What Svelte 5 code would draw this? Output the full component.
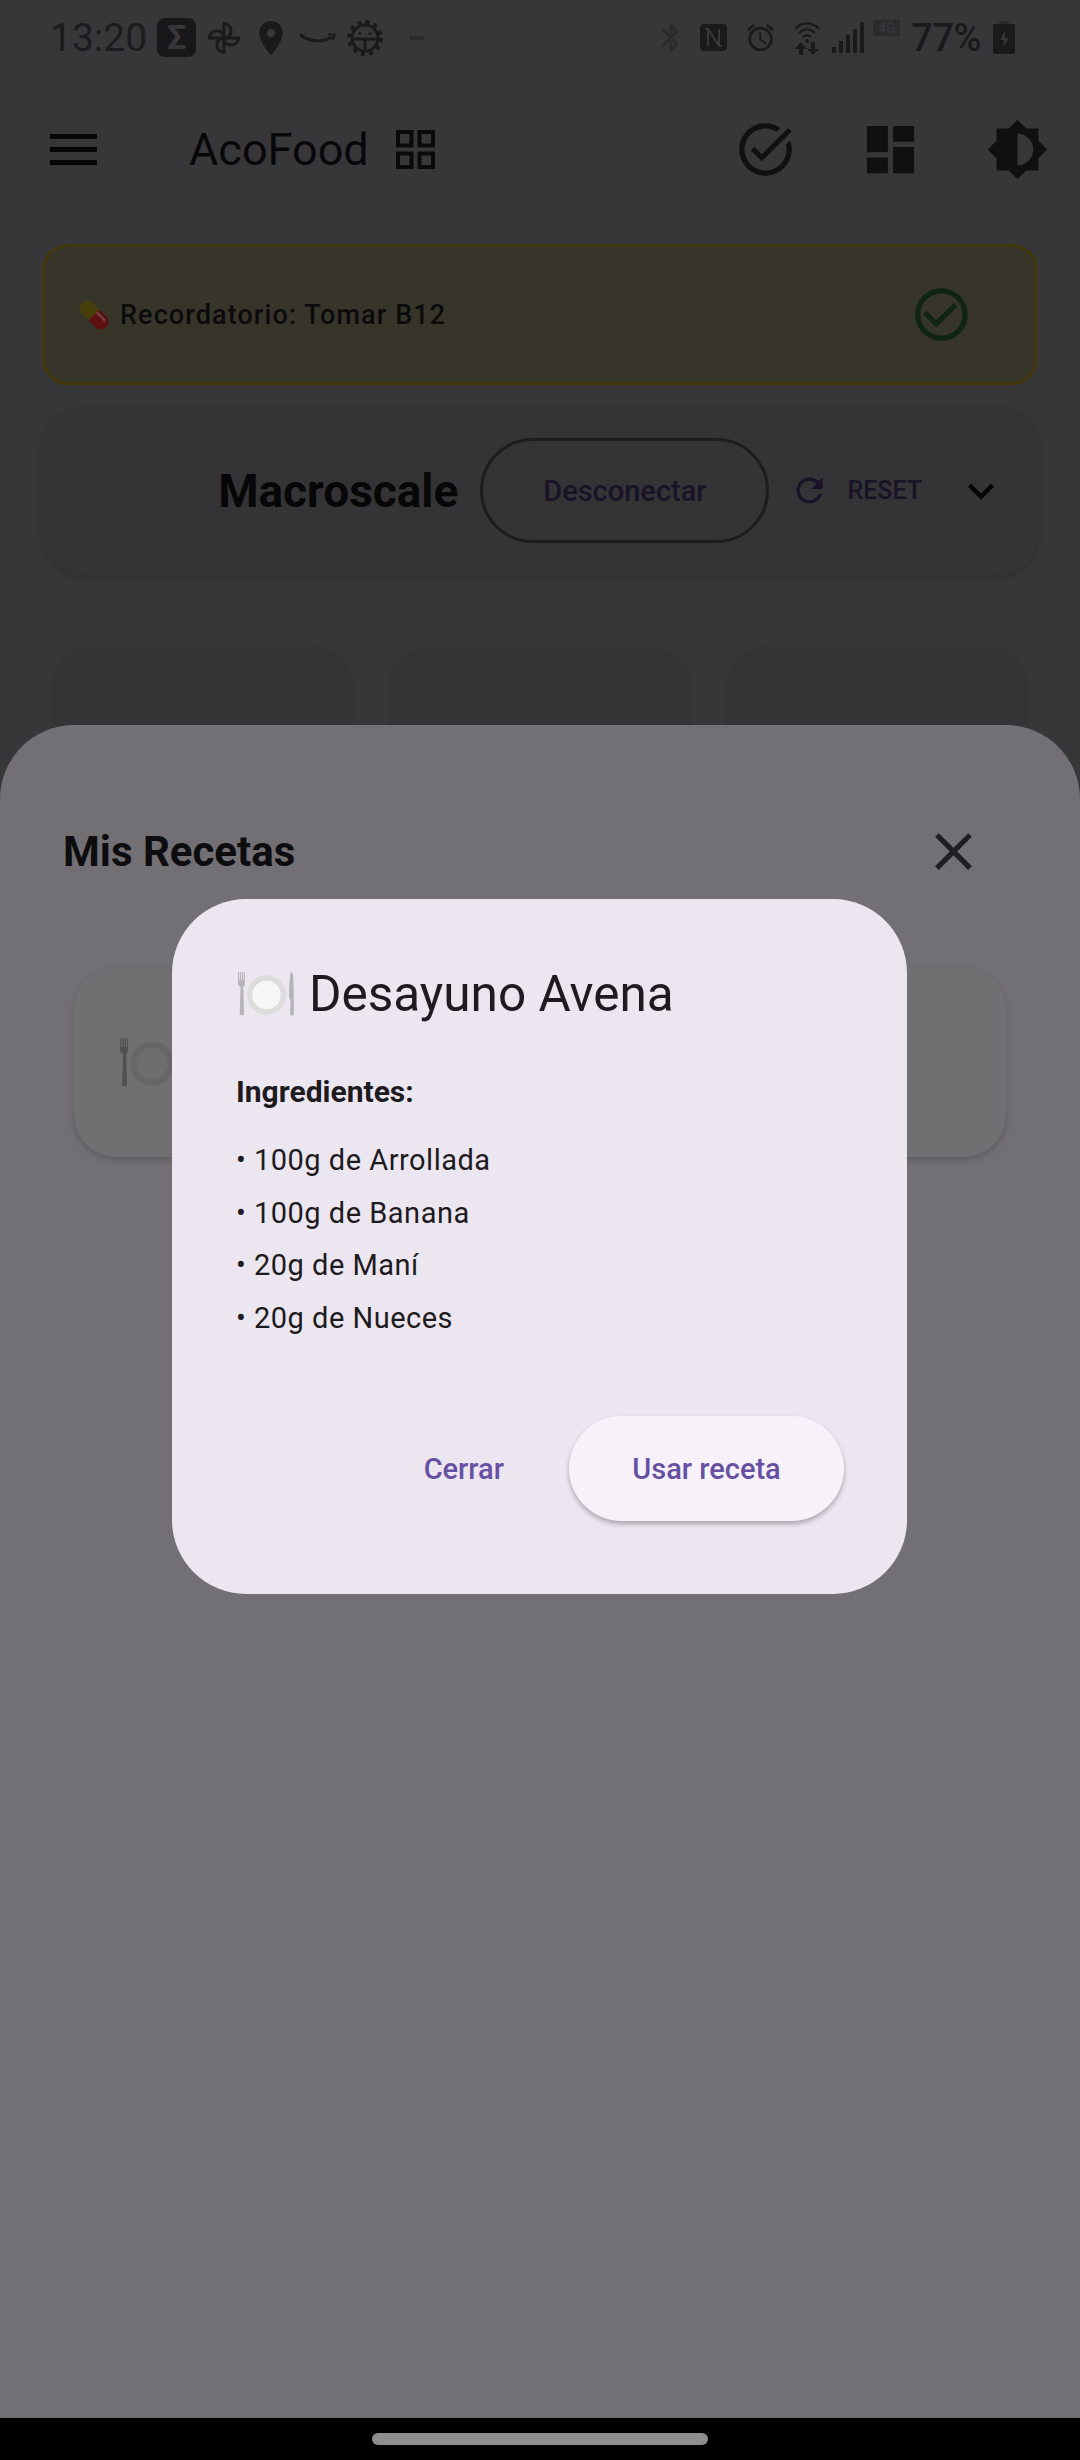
<script>
  const ingredients = ["100g de Arrollada", "100g de Banana", "20g de Maní", "20g de Nueces"];
  const petals = [0, 90, 180, 270];
  const bars = [
    { x: 0, h: 6 },
    { x: 7, h: 12 },
    { x: 14, h: 18 },
    { x: 21, h: 24 },
    { x: 28, h: 31 },
  ];
</script>

{#snippet plateEmoji()}
  <svg class="plate-emoji" viewBox="0 0 60 46">
    <path class="fork" d="M2 1h1.200v8h.8V1h1.200v8h.8V1h1.200v8h.8V1H9v11c0 2-1 3-1.600 3.500L8.200 43c0 2-4.400 2-4.400 0L4.600 15.500C3 15 2 14 2 12z" />
    <circle class="plate-rim" cx="31" cy="24" r="20" />
    <circle class="plate-in" cx="31" cy="24" r="14.500" />
    <path class="fork" d="M56 0c2 1 2.500 6 2.500 12l.5 31c0 2.500-4 2.500-4 0l.4-14-1.400-2C54 16 54.500 5 56 0z" />
  </svg>
{/snippet}

<div class="screen">
  <div class="page">
    <div class="status">
      <span class="time">13:20</span>
      <span class="sigma">Σ</span>
      <svg class="s-pinwheel" viewBox="0 0 36 36">
        {#each petals as r}
          <path d="M18 18V3.500A7 7 0 0 1 25 10.500Q25 18 18 18z" transform="rotate({r} 18 18)" />
        {/each}
      </svg>
      <svg class="s-pin" viewBox="5 2 14 20"><path d="M12 2C8.130 2 5 5.130 5 9c0 5.250 7 13 7 13s7-7.750 7-13c0-3.870-3.130-7-7-7zm0 9.500c-1.380 0-2.500-1.120-2.500-2.500s1.120-2.500 2.500-2.500 2.500 1.120 2.500 2.500-1.120 2.500-2.500 2.500z" /></svg>
      <svg class="s-smile" viewBox="0 0 37 10">
        <path class="line" d="M1 1.500C10 9 24 10 33 4" />
        <path class="line thin" d="M29 1.500h6.500L34 7" />
      </svg>
      <svg class="s-gear" viewBox="0 0 36 36">
        <circle class="line" cx="18" cy="18" r="13" />
        <circle class="teeth" cx="18" cy="18" r="16" />
        <path class="line" d="M5 19h26M18 19v12" />
        <circle cx="13" cy="13.500" r="1.500" />
        <circle cx="23" cy="13.500" r="1.500" />
      </svg>
      <svg class="s-dots" viewBox="0 0 15 6">
        <circle cx="2.500" cy="3" r="2.500" />
        <circle cx="7.500" cy="3" r="2.500" />
        <circle cx="12.500" cy="3" r="2.500" />
      </svg>
      <div class="spacer"></div>
      <svg class="s-bt" viewBox="5 2 12.710 20"><path d="M17.710 7.710L12 2h-1v7.590L6.410 5 5 6.410 10.590 12 5 17.590 6.410 19 11 14.410V22h1l5.710-5.710-4.300-4.290 4.300-4.290zM13 5.830l1.880 1.880L13 9.590V5.830zm1.880 10.460L13 18.170v-3.760l1.880 1.880z" /></svg>
      <svg class="s-nfc" viewBox="0 0 27 27">
        <rect width="27" height="27" rx="4" />
        <path class="cut" d="M5 5h3l11 17h3M8 5v17M19 5v17" />
      </svg>
      <svg class="s-alarm" viewBox="2 1.860 20 20.140"><path d="M22 5.720l-4.600-3.860-1.290 1.530 4.600 3.860L22 5.720zM7.880 3.390L6.600 1.860 2 5.710l1.290 1.530 4.590-3.850zM12.500 8H11v6l4.750 2.850.75-1.230-4-2.370V8zM12 4c-4.970 0-9 4.030-9 9s4.030 9 9 9 9-4.030 9-9-4.030-9-9-9zm0 16c-3.870 0-7-3.130-7-7s3.130-7 7-7 7 3.130 7 7-3.130 7-7 7z" /></svg>
      <svg class="s-wifi" viewBox="0 0 26 34">
        <path class="line thin" d="M1 8C8 0.500 18 0.500 25 8M5 12C10 7 16 7 21 12M9 16c2.500-2 5.500-2 8 0" />
        <circle cx="13" cy="20" r="2" />
        <path d="M7 21l-6 7h4v6h4v-6h4zM17 21v7h-4l6 6 6-6h-4v-7z" />
      </svg>
      <svg class="s-signal" viewBox="0 0 32 31">
        {#each bars as b}
          <rect x={b.x} y={31 - b.h} width="4" height={b.h} />
        {/each}
      </svg>
      <span class="lte">4G</span>
      <span class="battery-text">77%</span>
      <svg class="s-battery" viewBox="0 0 22 33">
        <rect class="nub" x="6" width="10" height="4" />
        <rect y="3" width="22" height="30" rx="2" />
        <path class="bolt" d="M12.500 9L7 19h4l-1 8 5.500-10h-4z" />
      </svg>
    </div>

    <div class="appbar">
      <div class="menu">
        <span></span>
        <span></span>
        <span></span>
      </div>
      <span class="brand">AcoFood</span>
      <svg class="grid-icon" viewBox="0 0 39 39">
        <path d="M2 2h13.500v13.500H2zM23.500 2H37v13.500H23.500zM2 23.500h13.500V37H2zM23.500 23.500H37V37H23.500z" />
      </svg>
      <div class="spacer"></div>
      <svg class="bar-icon" viewBox="0 0 24 24"><path d="M22 5.180L10.590 16.600l-4.240-4.240 1.410-1.410 2.830 2.830 10-10L22 5.180zm-2.210 5.040c.13.570.21 1.170.21 1.780 0 4.420-3.580 8-8 8s-8-3.580-8-8 3.580-8 8-8c1.580 0 3.040.46 4.280 1.250l1.440-1.440C16.100 2.670 14.130 2 12 2 6.480 2 2 6.480 2 12s4.480 10 10 10 10-4.480 10-10c0-1.190-.22-2.330-.6-3.390l-1.610 1.610z" /></svg>
      <svg class="bar-icon dash" viewBox="0 0 24 24"><path d="M3 13h8V3H3v10zm0 8h8v-6H3v6zm10 0h8V11h-8v10zm0-18v6h8V3h-8z" /></svg>
      <svg class="bar-icon bright" viewBox="0 0 24 24"><path d="M20 15.310L23.310 12 20 8.690V4h-4.690L12 .69 8.690 4H4v4.690L.69 12 4 15.310V20h4.690L12 23.310 15.310 20H20v-4.690zM12 18V6c3.310 0 6 2.690 6 6s-2.690 6-6 6z" /></svg>
    </div>

    <div class="reminder">
      <svg class="pill" viewBox="0 0 30 30">
        <g transform="rotate(45 15 15)">
          <path class="pill-y" d="M-2 15C-2 9.500 1 7.500 7 7.500h8v15H7C1 22.500-2 20.500-2 15z" />
          <path class="pill-r" d="M32 15c0-5.500-3-7.500-9-7.500h-8v15h8c6 0 9-2 9-7.500z" />
          <rect class="pill-shine" x="15" y="10" width="12" height="2.500" />
        </g>
      </svg>
      <span class="reminder-text">Recordatorio: Tomar B12</span>
      <div class="spacer"></div>
      <svg class="done" viewBox="0 0 24 24"><path d="M16.590 7.580L10 14.170l-3.590-3.580L5 12l5 5 8-8zM12 2C6.480 2 2 6.480 2 12s4.480 10 10 10 10-4.480 10-10S17.520 2 12 2zm0 18c-4.420 0-8-3.580-8-8s3.580-8 8-8 8 3.580 8 8-3.580 8-8 8z" /></svg>
    </div>

    <div class="scale">
      <span class="scale-title">Macroscale</span>
      <div class="outline-btn">Desconectar</div>
      <svg class="refresh" viewBox="0 0 24 24"><path d="M17.650 6.350C16.200 4.900 14.210 4 12 4c-4.420 0-7.990 3.580-7.990 8s3.570 8 7.990 8c3.730 0 6.840-2.550 7.730-6h-2.080c-.82 2.330-3.040 4-5.650 4-3.310 0-6-2.690-6-6s2.690-6 6-6c1.660 0 3.140.69 4.220 1.780L13 11h7V4l-2.350 2.350z" /></svg>
      <span class="reset">RESET</span>
      <svg class="chevron" viewBox="0 0 24 24"><path d="M16.590 8.590L12 13.170 7.410 8.590 6 10l6 6 6-6z" /></svg>
    </div>

    <div class="tiles">
      <div class="tile"></div>
      <div class="tile"></div>
      <div class="tile"></div>
    </div>
  </div>

  <div class="nav"><span class="handle"></span></div>

  <div class="sheet">
    <div class="sheet-head">
      <span class="sheet-title">Mis Recetas</span>
      <svg class="close" viewBox="0 0 24 24"><path d="M19 6.410L17.590 5 12 10.590 6.410 5 5 6.410 10.590 12 5 17.590 6.410 19 12 13.410 17.590 19 19 17.590 13.410 12z" /></svg>
    </div>
    <div class="recipe">
      <div class="dim">{@render plateEmoji()}</div>
    </div>
  </div>

  <div class="dialog">
    <div class="dialog-title">
      <div class="bright-emoji">{@render plateEmoji()}</div>
      <span>Desayuno Avena</span>
    </div>
    <div class="label">Ingredientes:</div>
    <div class="list">
      {#each ingredients as item}
        <div>• {item}</div>
      {/each}
    </div>
    <div class="actions">
      <span class="text-btn">Cerrar</span>
      <span class="raised-btn">Usar receta</span>
    </div>
  </div>
</div>

<style>
  :global(body) {
    background: #000;
  }

  .screen {
    position: relative;
    width: 1080px;
    height: 2460px;
    overflow: hidden;
    display: flex;
    flex-direction: column;
    background: #373639;
    font-family: Roboto, "Noto Sans", sans-serif;
  }

  .page {
    flex: 1;
    overflow: hidden;
  }

  .spacer {
    flex: 1;
  }

  svg {
    display: block;
    flex: none;
    fill: currentColor;
  }

  .line {
    fill: none;
    stroke: currentColor;
    stroke-width: 3;
  }

  .line.thin {
    stroke-width: 2.200;
  }

  /* status bar */
  .status {
    height: 75px;
    display: flex;
    align-items: center;
    padding: 0 65px 0 50px;
    color: #1a1a1c;
  }

  .time {
    font-size: 39px;
    color: #1c1c1e;
  }

  .sigma {
    width: 39px;
    height: 39px;
    margin-left: 10px;
    border-radius: 8px;
    background: #18181a;
    color: #373639;
    font-size: 34px;
    font-weight: 700;
    line-height: 39px;
    text-align: center;
  }

  .s-pinwheel {
    width: 36px;
    height: 36px;
    margin-left: 10px;
    fill: none;
    stroke: currentColor;
    stroke-width: 3;
  }

  .s-pin {
    width: 24px;
    height: 34px;
    margin-left: 17px;
  }

  .s-smile {
    width: 37px;
    height: 10px;
    margin-left: 16px;
  }

  .s-gear {
    width: 36px;
    height: 36px;
    margin-left: 11px;
  }

  .teeth {
    fill: none;
    stroke: currentColor;
    stroke-width: 4;
    stroke-dasharray: 4 4.400;
  }

  .s-dots {
    width: 15px;
    height: 6px;
    margin-left: 26px;
    color: #2a2a2c;
  }

  .s-bt {
    width: 18px;
    height: 29px;
    color: #2b2b2d;
  }

  .s-nfc {
    width: 27px;
    height: 27px;
    margin-left: 21px;
  }

  .cut {
    fill: none;
    stroke: #373639;
    stroke-width: 2.200;
  }

  .s-alarm {
    width: 27px;
    height: 29px;
    margin-left: 20px;
  }

  .s-wifi {
    width: 26px;
    height: 34px;
    margin-left: 20px;
  }

  .s-signal {
    width: 32px;
    height: 31px;
    margin-left: 12px;
  }

  .lte {
    align-self: flex-start;
    width: 27px;
    height: 16px;
    margin: 20px 0 0 9px;
    background: #2b2b2d;
    color: #373639;
    font-size: 14px;
    font-weight: 700;
    line-height: 16px;
    text-align: center;
  }

  .battery-text {
    margin-left: 11px;
    font-size: 38px;
    font-weight: 500;
    line-height: 1;
    letter-spacing: -0.500px;
  }

  .s-battery {
    width: 22px;
    height: 33px;
    margin-left: 12px;
  }

  .nub {
    fill: #2b2b2d;
  }

  .bolt {
    fill: #373639;
  }

  /* app bar */
  .appbar {
    height: 148px;
    display: flex;
    align-items: center;
    padding: 0 31px 0 50px;
    color: #08080a;
  }

  .menu {
    width: 47px;
    display: flex;
    flex-direction: column;
    gap: 8px;
  }

  .menu span {
    height: 5px;
    background: #060606;
  }

  .brand {
    margin-left: 92px;
    font-size: 45px;
    font-weight: 400;
  }

  .grid-icon {
    width: 39px;
    height: 39px;
    margin-left: 27px;
    fill: none;
    stroke: #0a0a0c;
    stroke-width: 4;
  }

  .bar-icon {
    width: 63px;
    height: 63px;
    color: #101012;
  }

  .dash {
    margin-left: 62px;
  }

  .bright {
    margin-left: 64px;
  }

  /* reminder */
  .reminder {
    height: 141px;
    box-sizing: border-box;
    margin: 21px 42px 0;
    padding: 0 62px 0 34px;
    display: flex;
    align-items: center;
    background: #37352a;
    border: 3px solid #43370c;
    border-radius: 26px;
  }

  .pill {
    width: 30px;
    height: 30px;
  }

  .pill-y {
    fill: #463f0c;
  }

  .pill-r {
    fill: #5e0f10;
  }

  .pill-shine {
    fill: #8a6a6a;
    opacity: 0.5;
  }

  .reminder-text {
    margin-left: 11px;
    color: #0b0b0b;
    font-size: 27px;
    font-weight: 500;
    letter-spacing: 1.100px;
  }

  .done {
    width: 63px;
    height: 63px;
    color: #102511;
  }

  /* scale card */
  .scale {
    height: 169px;
    margin: 21px 41px 0 42px;
    padding-right: 32px;
    display: flex;
    align-items: center;
    justify-content: flex-end;
    background: #343336;
    border-radius: 42px;
    box-shadow: 0 3px 6px rgba(0, 0, 0, 0.16);
  }

  .scale-title {
    color: #070708;
    font-size: 46px;
    font-weight: 700;
  }

  .outline-btn {
    width: 289px;
    height: 105px;
    box-sizing: border-box;
    margin-left: 22px;
    display: flex;
    align-items: center;
    justify-content: center;
    border: 3px solid #1d1c1f;
    border-radius: 53px;
    color: #181326;
    font-size: 29px;
    font-weight: 500;
  }

  .refresh {
    width: 39px;
    height: 39px;
    margin-left: 21px;
    color: #181326;
  }

  .reset {
    margin-left: 18px;
    color: #181326;
    font-size: 25px;
    font-weight: 500;
  }

  .chevron {
    width: 52px;
    height: 52px;
    margin-left: 33px;
    color: #060606;
  }

  /* tiles behind the sheet */
  .tiles {
    display: grid;
    grid-template-columns: repeat(3, 1fr);
    gap: 35px;
    margin: 71px 52px 0;
  }

  .tile {
    height: 200px;
    background: #343336;
    border-radius: 42px;
    box-shadow: 0 1px 2px rgba(0, 0, 0, 0.08);
  }

  /* bottom sheet */
  .nav {
    height: 42px;
    flex: none;
    display: flex;
    align-items: center;
    justify-content: center;
    background: #000;
  }

  .handle {
    width: 336px;
    height: 12px;
    border-radius: 6px;
    background: #8e8e8e;
  }

  .sheet {
    position: absolute;
    top: 725px;
    left: 0;
    right: 0;
    bottom: 42px;
    background: #727074;
    border-radius: 74px 74px 0 0;
  }

  .sheet-head {
    height: 63px;
    padding: 95px 95px 0 63px;
    display: flex;
    align-items: center;
    justify-content: space-between;
  }

  .sheet-title {
    color: #0d0c0f;
    font-size: 42px;
    font-weight: 700;
  }

  .close {
    width: 63px;
    height: 63px;
    color: #201e23;
  }

  .recipe {
    height: 190px;
    margin: 84px 74px 0;
    padding-left: 44px;
    display: flex;
    align-items: center;
    background: #707073;
    border-radius: 42px;
    box-shadow: 0 3px 6px rgba(0, 0, 0, 0.18);
  }

  .plate-emoji {
    width: 100%;
    height: 100%;
  }

  .fork {
    fill: var(--fork);
  }

  .plate-rim {
    fill: var(--rim);
  }

  .plate-in {
    fill: var(--plate);
  }

  .dim {
    width: 66px;
    height: 51px;
    --fork: #505052;
    --rim: #666668;
    --plate: #6d6d6f;
  }

  /* dialog */
  .dialog {
    position: absolute;
    top: 899px;
    left: 172px;
    width: 735px;
    height: 695px;
    box-sizing: border-box;
    padding: 63px 63px 0 64px;
    background: #ece6f0;
    border-radius: 74px;
    color: #1d1b20;
  }

  .dialog-title {
    height: 64px;
    display: flex;
    align-items: center;
    gap: 14px;
    font-size: 49.500px;
  }

  .bright-emoji {
    width: 59px;
    height: 46px;
    --fork: #b4b4b8;
    --rim: #dcdcdc;
    --plate: #f6f6f6;
  }

  .label {
    margin-top: 46px;
    font-size: 30px;
    font-weight: 700;
    line-height: 40px;
  }

  .list {
    margin-top: 22px;
    font-size: 29px;
    line-height: 52.500px;
    letter-spacing: 0.500px;
  }

  .actions {
    margin-top: 72px;
    display: flex;
    align-items: center;
    justify-content: flex-end;
    gap: 65px;
    color: #6750a4;
    font-size: 29px;
    font-weight: 500;
  }

  .raised-btn {
    width: 275px;
    height: 105px;
    display: flex;
    align-items: center;
    justify-content: center;
    background: #f7f2fa;
    border-radius: 53px;
    box-shadow: 0 3px 5px rgba(0, 0, 0, 0.28);
  }
</style>
